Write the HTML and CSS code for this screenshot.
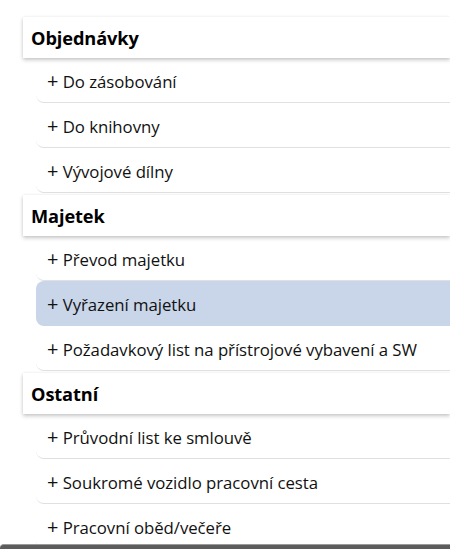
FILE: index.html
```html
<!DOCTYPE html>
<html lang="cs">
<head>
<meta charset="utf-8">
<link rel="stylesheet" href="styles.css">
</head>
<body>
<div class="menu">
  <section class="group">
    <h2 class="group-title">Objednávky</h2>
    <ul class="items">
      <li class="item"><span class="plus">+</span> Do zásobování</li>
      <li class="item"><span class="plus">+</span> Do knihovny</li>
      <li class="item"><span class="plus">+</span> Vývojové dílny</li>
    </ul>
  </section>
  <section class="group">
    <h2 class="group-title">Majetek</h2>
    <ul class="items">
      <li class="item"><span class="plus">+</span> Převod majetku</li>
      <li class="item item-active"><span class="plus">+</span> Vyřazení majetku</li>
      <li class="item"><span class="plus">+</span> Požadavkový list na přístrojové vybavení a SW</li>
    </ul>
  </section>
  <section class="group">
    <h2 class="group-title">Ostatní</h2>
    <ul class="items">
      <li class="item"><span class="plus">+</span> Průvodní list ke smlouvě</li>
      <li class="item"><span class="plus">+</span> Soukromé vozidlo pracovní cesta</li>
      <li class="item"><span class="plus">+</span> Pracovní oběd/večeře</li>
    </ul>
  </section>
</div>
<div class="bottom-bar"></div>
</body>
</html>
```

FILE: styles.css
```css
html, body {
  margin: 0;
  padding: 0;
  background: #fff;
  height: 100%;
  overflow: hidden;
}
body {
  font-family: "Open Sans", "Noto Sans", sans-serif;
  color: #111;
  position: relative;
}
.menu {
  padding: 17px 0 0 23px;
  display: flex;
  flex-direction: column;
  gap: 2px;
}
.group {
  display: flex;
  flex-direction: column;
}
.group-title {
  margin: 0;
  height: 41px;
  display: flex;
  align-items: center;
  padding-left: 8px;
  font-size: 18.2px;
  font-weight: 700;
  letter-spacing: -0.1px;
  color: #000;
  background: #fff;
  box-shadow: 0 2px 4px rgba(0,0,0,0.22), 0 0 3px rgba(0,0,0,0.05);
  position: relative;
  z-index: 1;
}
.items {
  list-style: none;
  margin: 0 0 0 13px;
  padding: 0;
}
.item {
  display: flex;
  align-items: center;
  white-space: pre;
  padding: 2px 0 0 11px;
  box-sizing: border-box;
  height: 45px;
  font-size: 16.8px;
  letter-spacing: -0.05px;
  color: #111;
  border-bottom: 1px solid #e0e0e0;
  border-bottom-left-radius: 8px;
}
.plus {
  font-size: 20px;
  line-height: 1;
  margin-top: -1px;
}
.item-active {
  background: #c9d5e8;
  border-radius: 8px 0 0 8px;
  border-bottom-color: transparent;
}
.bottom-bar {
  position: absolute;
  left: 0;
  right: 0;
  bottom: 0;
  height: 4px;
  background: #5c5c5c;
  border-top: 1px solid #9a9a9a;
  border-top-left-radius: 4px;
}
```
